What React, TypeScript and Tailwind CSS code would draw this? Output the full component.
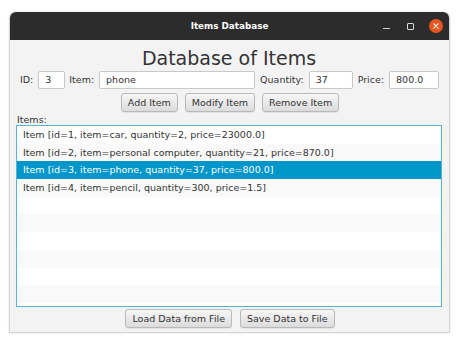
import React from "react";

const items = [
  "Item [id=1, item=car, quantity=2, price=23000.0]",
  "Item [id=2, item=personal computer, quantity=21, price=870.0]",
  "Item [id=3, item=phone, quantity=37, price=800.0]",
  "Item [id=4, item=pencil, quantity=300, price=1.5]",
];

function Btn({ children }: { children: React.ReactNode }) {
  return (
    <div className="h-[19px] px-[6px] flex items-center rounded-[3px] border border-[#b9b9b9] bg-gradient-to-b from-[#f7f7f7] to-[#dcdcdc] text-[9.5px] text-[#333] leading-none shadow-[0_1px_0_rgba(0,0,0,0.06)]">
      {children}
    </div>
  );
}

function Field({ w, value }: { w: string; value: string }) {
  return (
    <div className={`${w} h-[18px] flex items-center px-[6px] bg-white border border-[#c8c8c8] rounded-[2px] text-[9.5px] text-[#333] leading-none`}>
      {value}
    </div>
  );
}

export default function App() {
  const rows = Array.from({ length: 11 }, (_, i) => i);
  return (
    <div className="w-[474px] h-[340px] bg-white overflow-hidden" style={{ fontFamily: '"DejaVu Sans", sans-serif' }}>
      <div className="ml-[9px] mt-[12px] w-[441px] h-[321px] flex flex-col border border-[#d4d4d4] border-t-0 rounded-t-[6px] shadow-[0_0_2px_rgba(0,0,0,0.15)] bg-[#f3f3f3]">
        {/* Title bar */}
        <div className="h-[28px] shrink-0 bg-[#2c2c2c] rounded-t-[6px] relative flex items-center justify-center">
          <span className="text-white text-[8.8px] font-bold leading-none">Items Database</span>
          <div className="absolute right-[6px] top-0 h-full flex items-center">
            <div className="w-[7px] h-[1px] bg-[#cfcfcf] mt-[5px]" />
            <div className="ml-[17px] w-[7px] h-[7px] border border-[#d8d8d8] rounded-[1px]" />
            <div className="ml-[15px] w-[14px] h-[14px] rounded-full bg-[#e9541f] flex items-center justify-center">
              <svg width="6" height="6" viewBox="0 0 6 6">
                <path d="M0.8 0.8 L5.2 5.2 M5.2 0.8 L0.8 5.2" stroke="white" strokeWidth="1.2" strokeLinecap="round" />
              </svg>
            </div>
          </div>
        </div>
        {/* Content */}
        <div className="flex-1 flex flex-col pl-[6px] pr-[7px]">
          <div className="h-[31px] flex items-center justify-center text-[19px] text-[#333] leading-none pt-[6px]">
            Database of Items
          </div>
          <div className="h-[18px] flex items-center justify-center gap-[5px] text-[9.5px] text-[#333] leading-none ml-[1px]">
            <span>ID:</span>
            <Field w="w-[27px]" value="3" />
            <span className="ml-[-1px]">Item:</span>
            <Field w="w-[156px]" value="phone" />
            <span>Quantity:</span>
            <Field w="w-[44px]" value="37" />
            <span>Price:</span>
            <Field w="w-[50px]" value="800.0" />
          </div>
          <div className="mt-[4px] flex justify-center gap-[7px] ml-[2px]">
            <Btn>Add Item</Btn>
            <Btn>Modify Item</Btn>
            <Btn>Remove Item</Btn>
          </div>
          <div className="mt-[2px] h-[11px] flex items-center text-[9.5px] text-[#333] leading-none ml-[1px]">Items:</div>
          <div className="h-[182px] border border-[#5ab2d4] bg-white overflow-hidden">
            {rows.map((i) => {
              const sel = i === 2;
              const bg = sel ? "bg-[#0096c9] text-white" : i % 2 === 1 ? "bg-[#f9f9f9] text-[#333]" : "bg-white text-[#333]";
              return (
                <div key={i} className={`h-[17.7px] flex items-center pl-[6px] text-[9.5px] leading-none whitespace-nowrap ${bg}`}>
                  {items[i] ?? ""}
                </div>
              );
            })}
          </div>
          <div className="mt-[2px] flex justify-center gap-[8px] ml-[2px]">
            <Btn>Load Data from File</Btn>
            <Btn>Save Data to File</Btn>
          </div>
        </div>
      </div>
    </div>
  );
}
